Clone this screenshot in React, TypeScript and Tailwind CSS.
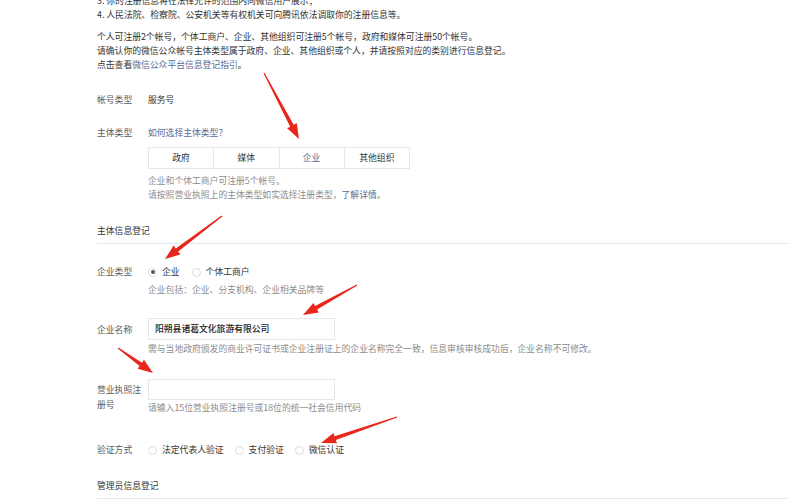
import React from "react";

const FONT = { fontFamily: '"Noto Sans CJK SC", "Noto Sans", sans-serif' };

type Arrow = { x1: number; y1: number; x2: number; y2: number };

const ARROWS: Arrow[] = [
  { x1: 264, y1: 73, x2: 299, y2: 139 },
  { x1: 222, y1: 216, x2: 165, y2: 259 },
  { x1: 357, y1: 285, x2: 303, y2: 315 },
  { x1: 118, y1: 348, x2: 153, y2: 373 },
  { x1: 397, y1: 417, x2: 321, y2: 443 },
];

function arrowPoints({ x1, y1, x2, y2 }: Arrow) {
  const dx = x2 - x1;
  const dy = y2 - y1;
  const len = Math.hypot(dx, dy);
  const ux = dx / len;
  const uy = dy / len;
  const nx = -uy;
  const ny = ux;
  const headLen = 15;
  const headW = 5.5;
  const bx = x2 - ux * headLen;
  const by = y2 - uy * headLen;
  const tailW = 0.6;
  const neckW = 2;
  const pts = [
    [x1 + nx * tailW, y1 + ny * tailW],
    [bx + nx * neckW, by + ny * neckW],
    [bx + nx * headW, by + ny * headW],
    [x2, y2],
    [bx - nx * headW, by - ny * headW],
    [bx - nx * neckW, by - ny * neckW],
    [x1 - nx * tailW, y1 - ny * tailW],
  ];
  return pts.map((p) => p.map((v) => v.toFixed(1)).join(",")).join(" ");
}

function Radio({ checked, label }: { checked?: boolean; label: string }) {
  return (
    <label className="flex items-center gap-[5px]">
      <span className="flex h-[9px] w-[9px] items-center justify-center rounded-full border border-[#dcdcdc] bg-white">
        {checked && <span className="h-[4px] w-[4px] rounded-full bg-[#555]" />}
      </span>
      <span className="text-[#353535]">{label}</span>
    </label>
  );
}

function Row({
  label,
  children,
  className = "",
}: {
  label: React.ReactNode;
  children: React.ReactNode;
  className?: string;
}) {
  return (
    <div className={`flex items-start ${className}`}>
      <div className="w-[51px] shrink-0 text-[#5a5a5a]">{label}</div>
      <div className="flex-1">{children}</div>
    </div>
  );
}

export default function App() {
  return (
    <div
      className="relative h-[500px] w-[788px] overflow-hidden bg-white text-[8.8px] leading-[14px] text-[#333]"
      style={FONT}
    >
      <div className="-mt-[6px] pl-[97px]">
        <p>3. 你的注册信息将在法律允许的范围内向微信用户展示；</p>
        <p>4. 人民法院、检察院、公安机关等有权机关可向腾讯依法调取你的注册信息等。</p>

        <div className="mt-[8px]">
          <p>个人可注册2个帐号，个体工商户、企业、其他组织可注册5个帐号，政府和媒体可注册50个帐号。</p>
          <p>请确认你的微信公众帐号主体类型属于政府、企业、其他组织或个人，并请按照对应的类别进行信息登记。</p>
          <p>
            点击查看<span className="text-[#576b95]">微信公众平台信息登记指引</span>。
          </p>
        </div>

        <Row label="帐号类型" className="mt-[21px]">
          <span className="text-[#353535]">服务号</span>
        </Row>

        <Row label="主体类型" className="mt-[19px]">
          <p className="text-[#576b95]">如何选择主体类型？</p>
          <div className="mt-[7px] flex h-[22px] w-[262px] border border-[#e7e7eb]">
            {["政府", "媒体", "企业", "其他组织"].map((t, i) => (
              <div
                key={t}
                className={`flex flex-1 items-center justify-center ${
                  i > 0 ? "border-l border-[#e7e7eb]" : ""
                } ${t === "企业" ? "text-[#576b95]" : "text-[#353535]"}`}
              >
                {t}
              </div>
            ))}
          </div>
          <div className="mt-[5px] text-[#8d8d8d]">
            <p>企业和个体工商户可注册5个帐号。</p>
            <p>
              请按照营业执照上的主体类型如实选择注册类型，
              <span className="text-[#576b95]">了解详情</span>。
            </p>
          </div>
        </Row>

        <div className="mt-[22px] border-b border-[#e7e7eb] pb-[5px] text-[#353535]">
          主体信息登记
        </div>

        <Row label="企业类型" className="mt-[21px]">
          <div className="flex items-center gap-[12px]">
            <Radio checked label="企业" />
            <Radio label="个体工商户" />
          </div>
          <p className="mt-[4px] text-[#8d8d8d]">企业包括：企业、分支机构、企业相关品牌等</p>
        </Row>

        <Row label={<div className="mt-[5px]">企业名称</div>} className="mt-[21px]">
          <div className="flex h-[22px] w-[187px] items-center border border-[#e7e7eb] px-[6px] font-medium text-[#222]">
            阳朔县诸葛文化旅游有限公司
          </div>
          <p className="mt-[2px] text-[#8d8d8d]">
            需与当地政府颁发的商业许可证书或企业注册证上的企业名称完全一致，信息审核审核成功后，企业名称不可修改。
          </p>
        </Row>

        <Row
          label={
            <div className="mt-[3px] leading-[15px]">
              营业执照注
              <br />
              册号
            </div>
          }
          className="mt-[23px]"
        >
          <div className="h-[21px] w-[187px] border border-[#e7e7eb]" />
          <p className="mt-[1px] text-[#8d8d8d]">请输入15位营业执照注册号或18位的统一社会信用代码</p>
        </Row>

        <Row label="验证方式" className="mt-[28px]">
          <div className="flex items-center gap-[11px]">
            <Radio label="法定代表人验证" />
            <Radio label="支付验证" />
            <Radio label="微信认证" />
          </div>
        </Row>

        <div className="mt-[22px] border-b border-[#e7e7eb] pb-[5px] text-[#353535]">
          管理员信息登记
        </div>
      </div>

      <svg
        className="pointer-events-none absolute left-0 top-0"
        width={788}
        height={500}
        viewBox="0 0 788 500"
      >
        {ARROWS.map((a, i) => (
          <polygon key={i} points={arrowPoints(a)} fill="#e8261c" />
        ))}
      </svg>
    </div>
  );
}
